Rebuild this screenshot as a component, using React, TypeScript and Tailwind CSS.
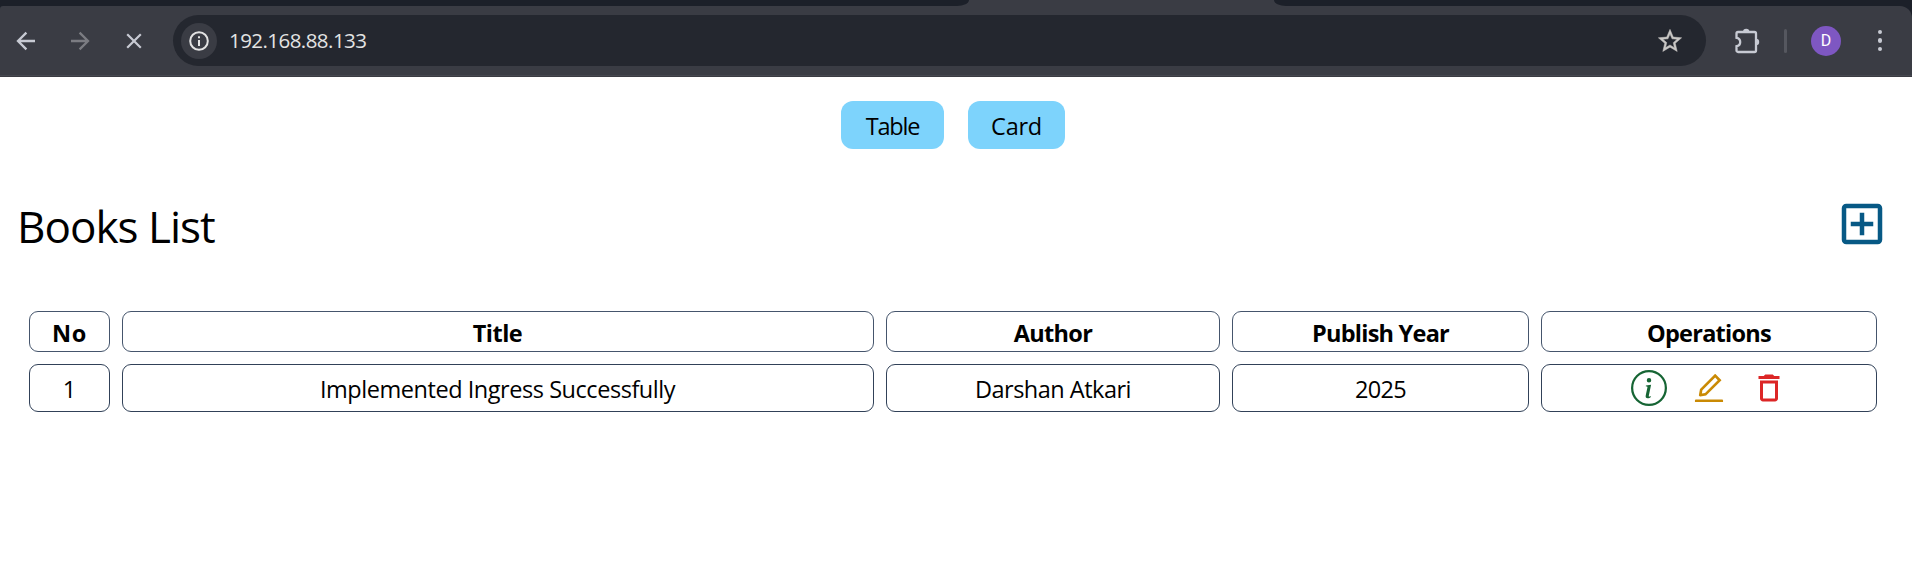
import type { ReactNode } from "react";
import { AiOutlineEdit } from "react-icons/ai";
import { BsInfoCircle } from "react-icons/bs";
import { MdOutlineAddBox, MdOutlineDelete } from "react-icons/md";

function TabStrip() {
  return (
    <div className="flex h-1.5 bg-[#3a3c44]">
      <div className="w-[969px] rounded-br-[12px_6px] bg-[#1c2029]" />
      <div className="w-[305px]" />
      <div className="flex-1 rounded-bl-[12px_6px] bg-[#1c2029]" />
    </div>
  );
}

function BackIcon({ className }: { className: string }) {
  return (
    <svg className={className} width="20" height="20" viewBox="0 0 20 20" fill="none" stroke="currentColor" strokeWidth="2.3">
      <path d="M19 10H2.5M10.4 1.6 2 10l8.4 8.4" />
    </svg>
  );
}

function StarIcon({ className }: { className: string }) {
  return (
    <svg className={className} viewBox="0 0 24 24" fill="currentColor" stroke="currentColor" strokeWidth="0.4">
      <path d="M22 9.240l-7.190-.62L12 2 9.190 8.630 2 9.240l5.460 4.730L5.820 21 12 17.270 18.180 21l-1.630-7.030L22 9.240zM12 15.400l-3.760 2.270 1-4.280-3.320-2.880 4.380-.38L12 6.100l1.710 4.040 4.380.38-3.320 2.880 1 4.280L12 15.400z" />
    </svg>
  );
}

function Toolbar() {
  return (
    <div className="border-b border-[#3a3b42] bg-[#1c2029]">
      <div className="flex h-[70px] items-center rounded-tl-[3px] rounded-tr-xl border-b border-[#45474f] bg-[#3a3c44] pl-4">
        <BackIcon className="text-[#c7cad3]" />
        <BackIcon className="ml-[34px] rotate-180 text-[#7b7c82]" />
        <svg className="ml-9 text-[#c7cad3]" width="16" height="16" viewBox="0 0 16 16" fill="none" stroke="currentColor" strokeWidth="2.2">
          <path d="m1.200 1.200 13.600 13.600M14.800 1.200 1.200 14.800" />
        </svg>
        <div className="ml-[31px] flex h-[51px] w-[1533px] items-center rounded-full bg-[#24272f] pr-[22px] pl-[7.5px]">
          <div className="flex size-9 items-center justify-center rounded-full bg-[#3a3c44] text-[#e3e3e3]">
            <svg width="20" height="20" viewBox="0 0 20 20" fill="none" stroke="currentColor" strokeWidth="2">
              <circle cx="10" cy="10" r="8.8" />
              <path d="M10 9v6M10 5.200v2" />
            </svg>
          </div>
          <span className="ml-[12.5px] flex-1 text-[20.5px] leading-none tracking-[-0.55px] text-[#e3e3e3]">192.168.88.133</span>
          <StarIcon className="size-7 text-[#c9c7c5]" />
        </div>
        <svg className="ml-[28px] text-[#c7cad3]" width="26" height="26" viewBox="0 0 26 26" fill="none" stroke="currentColor" strokeWidth="2.3">
          <path d="M4 4h16.500a1.500 1.500 0 0 1 1.500 1.500v17a1.500 1.500 0 0 1-1.500 1.500H4a1.500 1.500 0 0 1-1.500-1.500v-4.300c2.500-.4 3.700-2 3.700-4.200S5 10.200 2.500 9.800V5.500A1.500 1.500 0 0 1 4 4Z" />
          <path d="M9 4a3.200 3.200 0 0 1 6.400 0ZM22 10.800a3.200 3.200 0 0 1 0 6.400Z" fill="currentColor" stroke="none" />
        </svg>
        <div className="ml-6 h-6 w-[3px] rounded-full bg-[#55575f]" />
        <div className="ml-6 flex size-[30px] items-center justify-center rounded-full bg-[#7e57c2] font-[Roboto] text-base leading-none text-white">D</div>
        <div className="ml-[37px] flex flex-col gap-1">
          <i className="size-[4.4px] rounded-full bg-[#c7cad3]" />
          <i className="size-[4.4px] rounded-full bg-[#c7cad3]" />
          <i className="size-[4.4px] rounded-full bg-[#c7cad3]" />
        </div>
      </div>
    </div>
  );
}

function HeadCell({ children }: { children: ReactNode }) {
  return (
    <div className="flex h-[41px] items-center justify-center rounded-[9px] border border-slate-600 pt-1 font-bold">
      {children}
    </div>
  );
}

function Cell({ children }: { children: ReactNode }) {
  return (
    <div className="flex h-12 items-center justify-center rounded-[9px] border border-slate-700 pt-1">{children}</div>
  );
}

export default function App() {
  return (
    <div className="h-[577px] overflow-hidden bg-white font-['Open_Sans','Noto_Sans',sans-serif] text-[23.5px] leading-none text-black">
      <TabStrip />
      <Toolbar />
      <div className="flex gap-6 pt-6 pl-[841px]">
        <button className="h-12 w-[103px] rounded-xl bg-[#7dd3fc] pt-1 tracking-[-1.2px]">Table</button>
        <button className="h-12 w-[97px] rounded-xl bg-[#7dd3fc] pt-1 tracking-[-0.25px]">Card</button>
      </div>
      <div className="mt-12 flex h-[54px] items-center justify-between pr-[23px] pl-[17px]">
        <h1 className="pt-1 text-[44px] leading-none tracking-[-0.98px]">Books List</h1>
        <MdOutlineAddBox className="size-[54px] text-[#075985]" />
      </div>
      <div className="mt-[60px] ml-[29px] grid w-[1848px] grid-cols-[81px_752px_334px_297px_336px] gap-3">
        <HeadCell><span className="tracking-[0.6px]">No</span></HeadCell>
        <HeadCell><span className="pr-px tracking-[-0.5px]">Title</span></HeadCell>
        <HeadCell><span className="tracking-[-0.7px]">Author</span></HeadCell>
        <HeadCell><span className="tracking-[-0.75px]">Publish Year</span></HeadCell>
        <HeadCell><span className="tracking-[-0.74px]">Operations</span></HeadCell>
        <Cell>1</Cell>
        <Cell><span className="pr-px tracking-[-0.45px]">Implemented Ingress Successfully</span></Cell>
        <Cell><span className="tracking-[-0.5px]">Darshan Atkari</span></Cell>
        <Cell><span className="tracking-[-0.65px]">2025</span></Cell>
        <div className="flex h-12 items-center justify-center gap-6 rounded-[9px] border border-slate-700">
          <BsInfoCircle className="size-9 text-[#166534]" />
          <AiOutlineEdit className="size-9 text-[#ca8a04]" />
          <MdOutlineDelete className="size-9 text-[#dc2626]" />
        </div>
      </div>
    </div>
  );
}
